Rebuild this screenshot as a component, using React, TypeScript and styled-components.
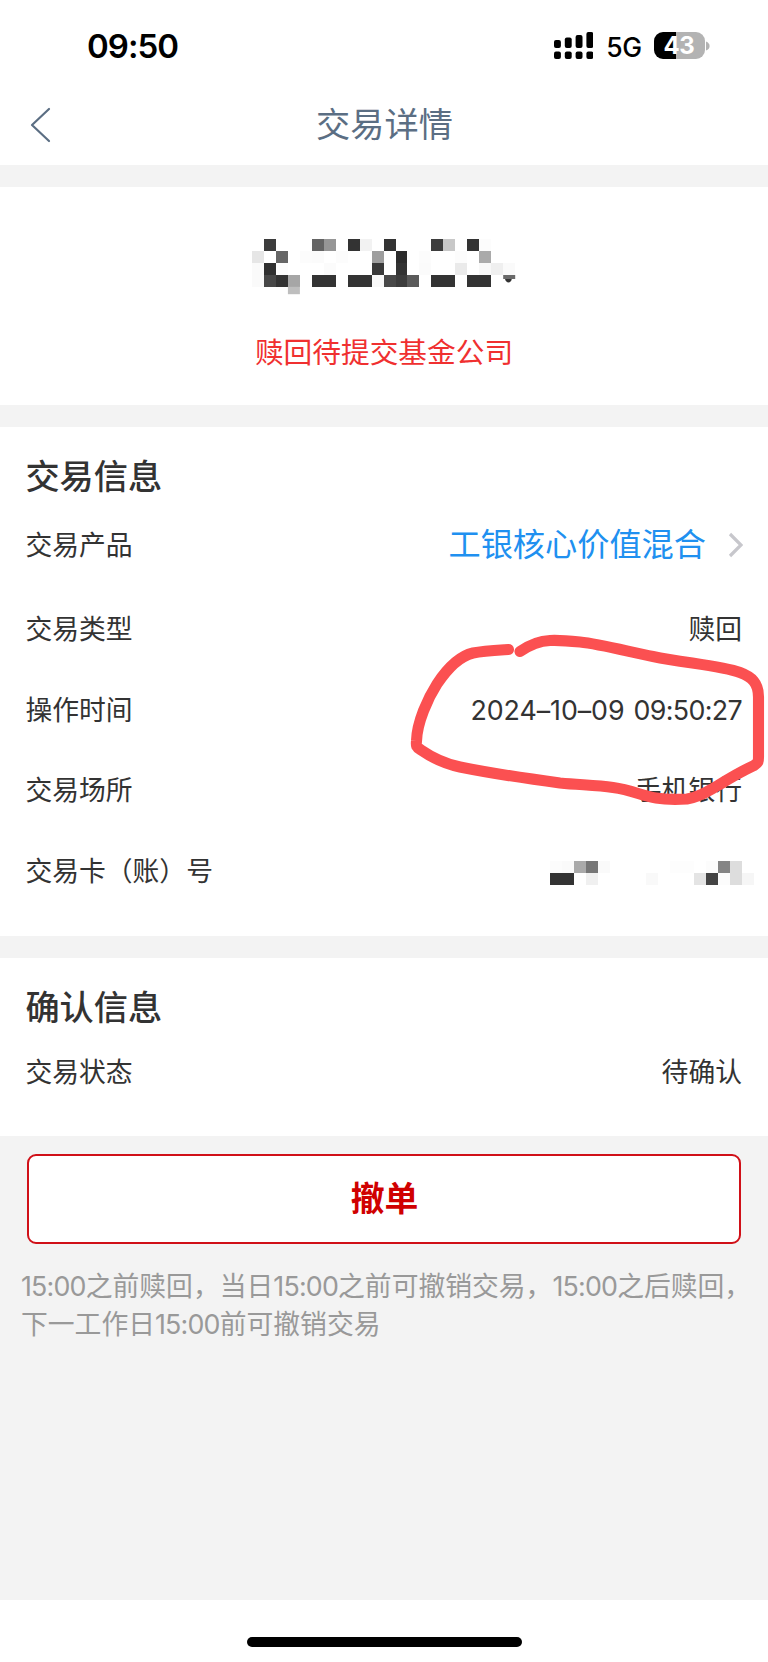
import React from "react";
import styled, { createGlobalStyle } from "styled-components";

const GlobalStyle = createGlobalStyle`
  * { box-sizing: border-box; }
  body {
    margin: 0;
    background: #f3f3f3;
    font-family: Inter, "Noto Sans CJK SC", sans-serif;
    color: #333;
  }
`;

const Screen = styled.div`
  position: relative;
  display: flex;
  flex-direction: column;
  gap: 22px;
  width: 768px;
  height: 1662px;
  overflow: hidden;
  background: #f3f3f3;
`;

const Header = styled.header`
  height: 165px;
  background: #fff;
`;

const StatusBar = styled.div`
  display: flex;
  align-items: center;
  height: 85px;
  padding: 6px 58px 0 87px;
  color: #000;
`;

const Clock = styled.span`
  margin-right: auto;
  font-size: 33px;
  font-weight: 600;
  line-height: 40px;
  letter-spacing: -0.95px;
`;

const Network = styled.span`
  margin: 2px 12px 0 13px;
  font-size: 26.5px;
  font-weight: 500;
  line-height: 32px;
  letter-spacing: -0.5px;
`;

const Battery = styled.div`
  display: flex;
  align-items: center;
  gap: 1.5px;
`;

const BatteryBody = styled.div`
  display: flex;
  align-items: center;
  justify-content: center;
  width: 51px;
  height: 27px;
  border-radius: 9px;
  background: linear-gradient(90deg, #000 22px, #b3b3b3 22px);
  color: #fff;
  font-size: 24px;
  font-weight: 700;
  line-height: 27px;
  letter-spacing: -0.4px;
`;

const NavBar = styled.div`
  display: grid;
  grid-template-columns: 61px 1fr 60px;
  align-items: center;
  height: 79px;
`;

const NavTitle = styled.h1`
  margin: 0;
  color: #5b6e83;
  font-size: 34.2px;
  font-weight: 400;
  line-height: 48px;
  text-align: center;
`;

const BackIcon = styled.svg`
  margin-left: 29px;
`;

const Summary = styled.section`
  display: flex;
  flex-direction: column;
  align-items: center;
  height: 218px;
  padding-top: 52px;
  background: #fff;
`;

const Amount = styled.div`
  display: flex;
  margin-left: 1.5px;
`;

const SummaryStatus = styled.p`
  margin: 38px 0 0;
  color: #f03030;
  font-size: 28.7px;
  line-height: 40px;
`;

const Section = styled.section<{ $height: number }>`
  height: ${(p) => p.$height}px;
  padding: 25.5px 26px 0 25.4px;
  background: #fff;
`;

const SectionTitle = styled.h2`
  margin: 0;
  font-size: 34.2px;
  font-weight: 500;
  line-height: 48px;
`;

const Row = styled.div<{ $height?: number }>`
  display: flex;
  align-items: center;
  justify-content: space-between;
  height: ${(p) => p.$height ?? 80.7}px;
  font-size: 26.8px;
  line-height: 38px;
`;

const Label = styled.span``;

const Value = styled.span`
  display: flex;
  gap: 9px;
`;

const Digits = styled.span<{ $spacing: number }>`
  letter-spacing: ${(p) => p.$spacing}px;
`;

const ProductLink = styled.span`
  display: flex;
  align-items: center;
  gap: 22px;
  margin-right: -1px;
  color: #2090f0;
  font-size: 32.2px;
  line-height: 46px;
`;

const MaskedAccount = styled.span`
  display: flex;
  margin: 5px -12px 0 0;
`;

const Actions = styled.section`
  margin-top: -4px;
  flex: 1;
`;

const CancelButton = styled.button`
  display: block;
  width: 714px;
  height: 90px;
  margin: 0 27px;
  padding: 0 0 0 1px;
  border: 2px solid #d01018;
  border-radius: 9px;
  background: #fff;
  color: #d00000;
  font-family: inherit;
  font-size: 33.8px;
  font-weight: 600;
  line-height: 48px;
`;

const Note = styled.p`
  margin: 24px 0 0 21px;
  color: #999;
  font-size: 26.8px;
  line-height: 37.6px;
  white-space: nowrap;
`;

const HomeArea = styled.footer`
  display: flex;
  justify-content: center;
  height: 62px;
  padding-top: 37px;
  background: #fff;
`;

const HomeIndicator = styled.div`
  width: 275px;
  height: 10px;
  border-radius: 5px;
  background: #000;
`;

const Scribble = styled.svg`
  position: absolute;
  left: 0;
  top: 0;
  pointer-events: none;
`;

type Cell = [column: number, row: number, shade: string];

const amountCells: Cell[] = [
  [1, 0, "3c"], [5, 0, "64"], [6, 0, "96"], [8, 0, "33"], [9, 0, "f2"],
  [11, 0, "33"], [15, 0, "3d"], [16, 0, "c8"], [18, 0, "33"], [19, 0, "fc"],
  [0, 1, "e6"], [2, 1, "66"], [4, 1, "fc"], [5, 1, "fb"], [7, 1, "fc"],
  [10, 1, "9e"], [12, 1, "2c"], [14, 1, "fc"], [17, 1, "fc"], [19, 1, "aa"],
  [0, 2, "fa"], [1, 2, "30"], [2, 2, "fc"], [6, 2, "fb"], [10, 2, "39"],
  [12, 2, "33"], [14, 2, "fb"], [17, 2, "ea"], [19, 2, "f8"], [20, 2, "ef"], [21, 2, "fa"],
  [0, 3, "fa"], [1, 3, "47"], [2, 3, "33"], [3, 3, "a6"], [5, 3, "33"], [6, 3, "33"],
  [8, 3, "33"], [9, 3, "33"], [10, 3, "f8"], [11, 3, "48"], [12, 3, "3c"],
  [13, 3, "5a"], [15, 3, "33"], [16, 3, "33"], [18, 3, "33"], [19, 3, "33"],
];

const accountCells: Cell[] = [
  [0, 0, "fc"], [1, 0, "fa"], [2, 0, "aa"], [3, 0, "77"], [4, 0, "fa"],
  [10, 0, "fd"], [11, 0, "fd"], [13, 0, "fc"], [14, 0, "85"], [15, 0, "dd"],
  [0, 1, "33"], [1, 1, "33"], [3, 1, "f0"], [8, 1, "f9"],
  [12, 1, "e4"], [13, 1, "44"], [14, 1, "fc"], [15, 1, "dd"], [16, 1, "f6"],
];

function Cells({ cells, size }: { cells: Cell[]; size: number }) {
  return (
    <g shapeRendering="crispEdges">
      {cells.map(([column, row, shade]) => (
        <rect
          key={`${column}-${row}`}
          x={column * size}
          y={row * size}
          width={size}
          height={size}
          fill={`#${shade}${shade}${shade}`}
        />
      ))}
    </g>
  );
}

const signalTops = [8, 5.5, 3, 0];

function Signal() {
  return (
    <svg width="39.5" height="27" viewBox="0 0 39.5 27">
      {signalTops.map((top, i) => (
        <g key={top}>
          <rect x={i * 10.8} y={top} width="6.9" height={16.1 - top} rx="2" />
          <rect x={i * 10.8} y="19.6" width="6.9" height="7.4" rx="2" />
        </g>
      ))}
    </svg>
  );
}

function Clause({ time, children }: { time: string; children: React.ReactNode }) {
  return (
    <>
      <Digits $spacing={-0.8}>{time}</Digits>
      {children}
    </>
  );
}

export default function App() {
  return (
    <Screen>
      <GlobalStyle />
      <Header>
        <StatusBar>
          <Clock>09:50</Clock>
          <Signal />
          <Network>5G</Network>
          <Battery>
            <BatteryBody>43</BatteryBody>
            <svg width="4" height="10" viewBox="0 0 4 10">
              <path d="M0 0.5Q3.6 2 3.6 5T0 9.5Z" fill="#b3b3b3" />
            </svg>
          </Battery>
        </StatusBar>
        <NavBar>
          <BackIcon width="24" height="36" viewBox="0 0 24 36" fill="none">
            <path d="M20 2L3 18L20 34" stroke="#5b6e83" strokeWidth="2.2" strokeLinecap="round" strokeLinejoin="round" />
          </BackIcon>
          <NavTitle>交易详情</NavTitle>
        </NavBar>
      </Header>

      <Summary>
        <Amount>
          <svg width="266" height="56" viewBox="0 0 266 56">
            <Cells cells={amountCells} size={11.96} />
            <rect x="35.9" y="47.8" width="12" height="7.4" fill="#bebebe" />
            <rect x="251.2" y="36" width="12" height="4" fill="#6a6a6a" />
            <path d="M253 40H259.800Q259 43.400 256.500 43.400T253 40Z" fill="#333" />
          </svg>
        </Amount>
        <SummaryStatus>赎回待提交基金公司</SummaryStatus>
      </Summary>

      <Section $height={509}>
        <SectionTitle>交易信息</SectionTitle>
        <Row $height={88}>
          <Label>交易产品</Label>
          <ProductLink>
            工银核心价值混合
            <svg width="15" height="26" viewBox="0 0 15 26" fill="none">
              <path d="M2 2L13 13L2 24" stroke="#c7c7cc" strokeWidth="3.2" />
            </svg>
          </ProductLink>
        </Row>
        <Row>
          <Label>交易类型</Label>
          <Value>赎回</Value>
        </Row>
        <Row>
          <Label>操作时间</Label>
          <Value>
            <Digits $spacing={-0.05}>2024–10–09</Digits>
            <Digits $spacing={-0.65}>09:50:27</Digits>
          </Value>
        </Row>
        <Row>
          <Label>交易场所</Label>
          <Value>手机银行</Value>
        </Row>
        <Row>
          <Label>交易卡（账）号</Label>
          <MaskedAccount>
            <svg width="204" height="24" viewBox="0 0 204 24">
              <Cells cells={accountCells} size={12} />
            </svg>
          </MaskedAccount>
        </Row>
      </Section>

      <Section $height={178}>
        <SectionTitle>确认信息</SectionTitle>
        <Row>
          <Label>交易状态</Label>
          <Value>待确认</Value>
        </Row>
      </Section>

      <Actions>
        <CancelButton>撤单</CancelButton>
        <Note>
          <Clause time="15:00">之前赎回，当日</Clause>
          <Clause time="15:00">之前可撤销交易，</Clause>
          <Clause time="15:00">之后赎回，</Clause>
          <br />
          下一工作日
          <Clause time="15:00">前可撤销交易</Clause>
        </Note>
      </Actions>

      <HomeArea>
        <HomeIndicator />
      </HomeArea>

      <Scribble width="768" height="1662" viewBox="0 0 768 1662" fill="none">
        <path
          d="M508.500 649.500C493 650.500 483 651 473 653C460 656 447 669 437 684C428 698 417 722 416.500 741C416 746 416 747 421 750C434 759 446 764 460 767C490 773 530 779 560 783C580 785 596 785 613 787.500C632 790 642 796 656 798C668 800 678 799.500 687 799C700 797 708 791 718 785.500C730 778 740 772 754 765.500C758 763 758.500 762 758.500 757V697C758.500 683 752 677 740 672.500C722 666 685 663 653 656.500C630 652 600 644 580 642C570 641 560 640 550 640.500C537 641 528 646 520 651.500"
          stroke="#fb5051"
          strokeWidth="11.1"
          strokeLinecap="round"
          strokeLinejoin="round"
        />
      </Scribble>
    </Screen>
  );
}
